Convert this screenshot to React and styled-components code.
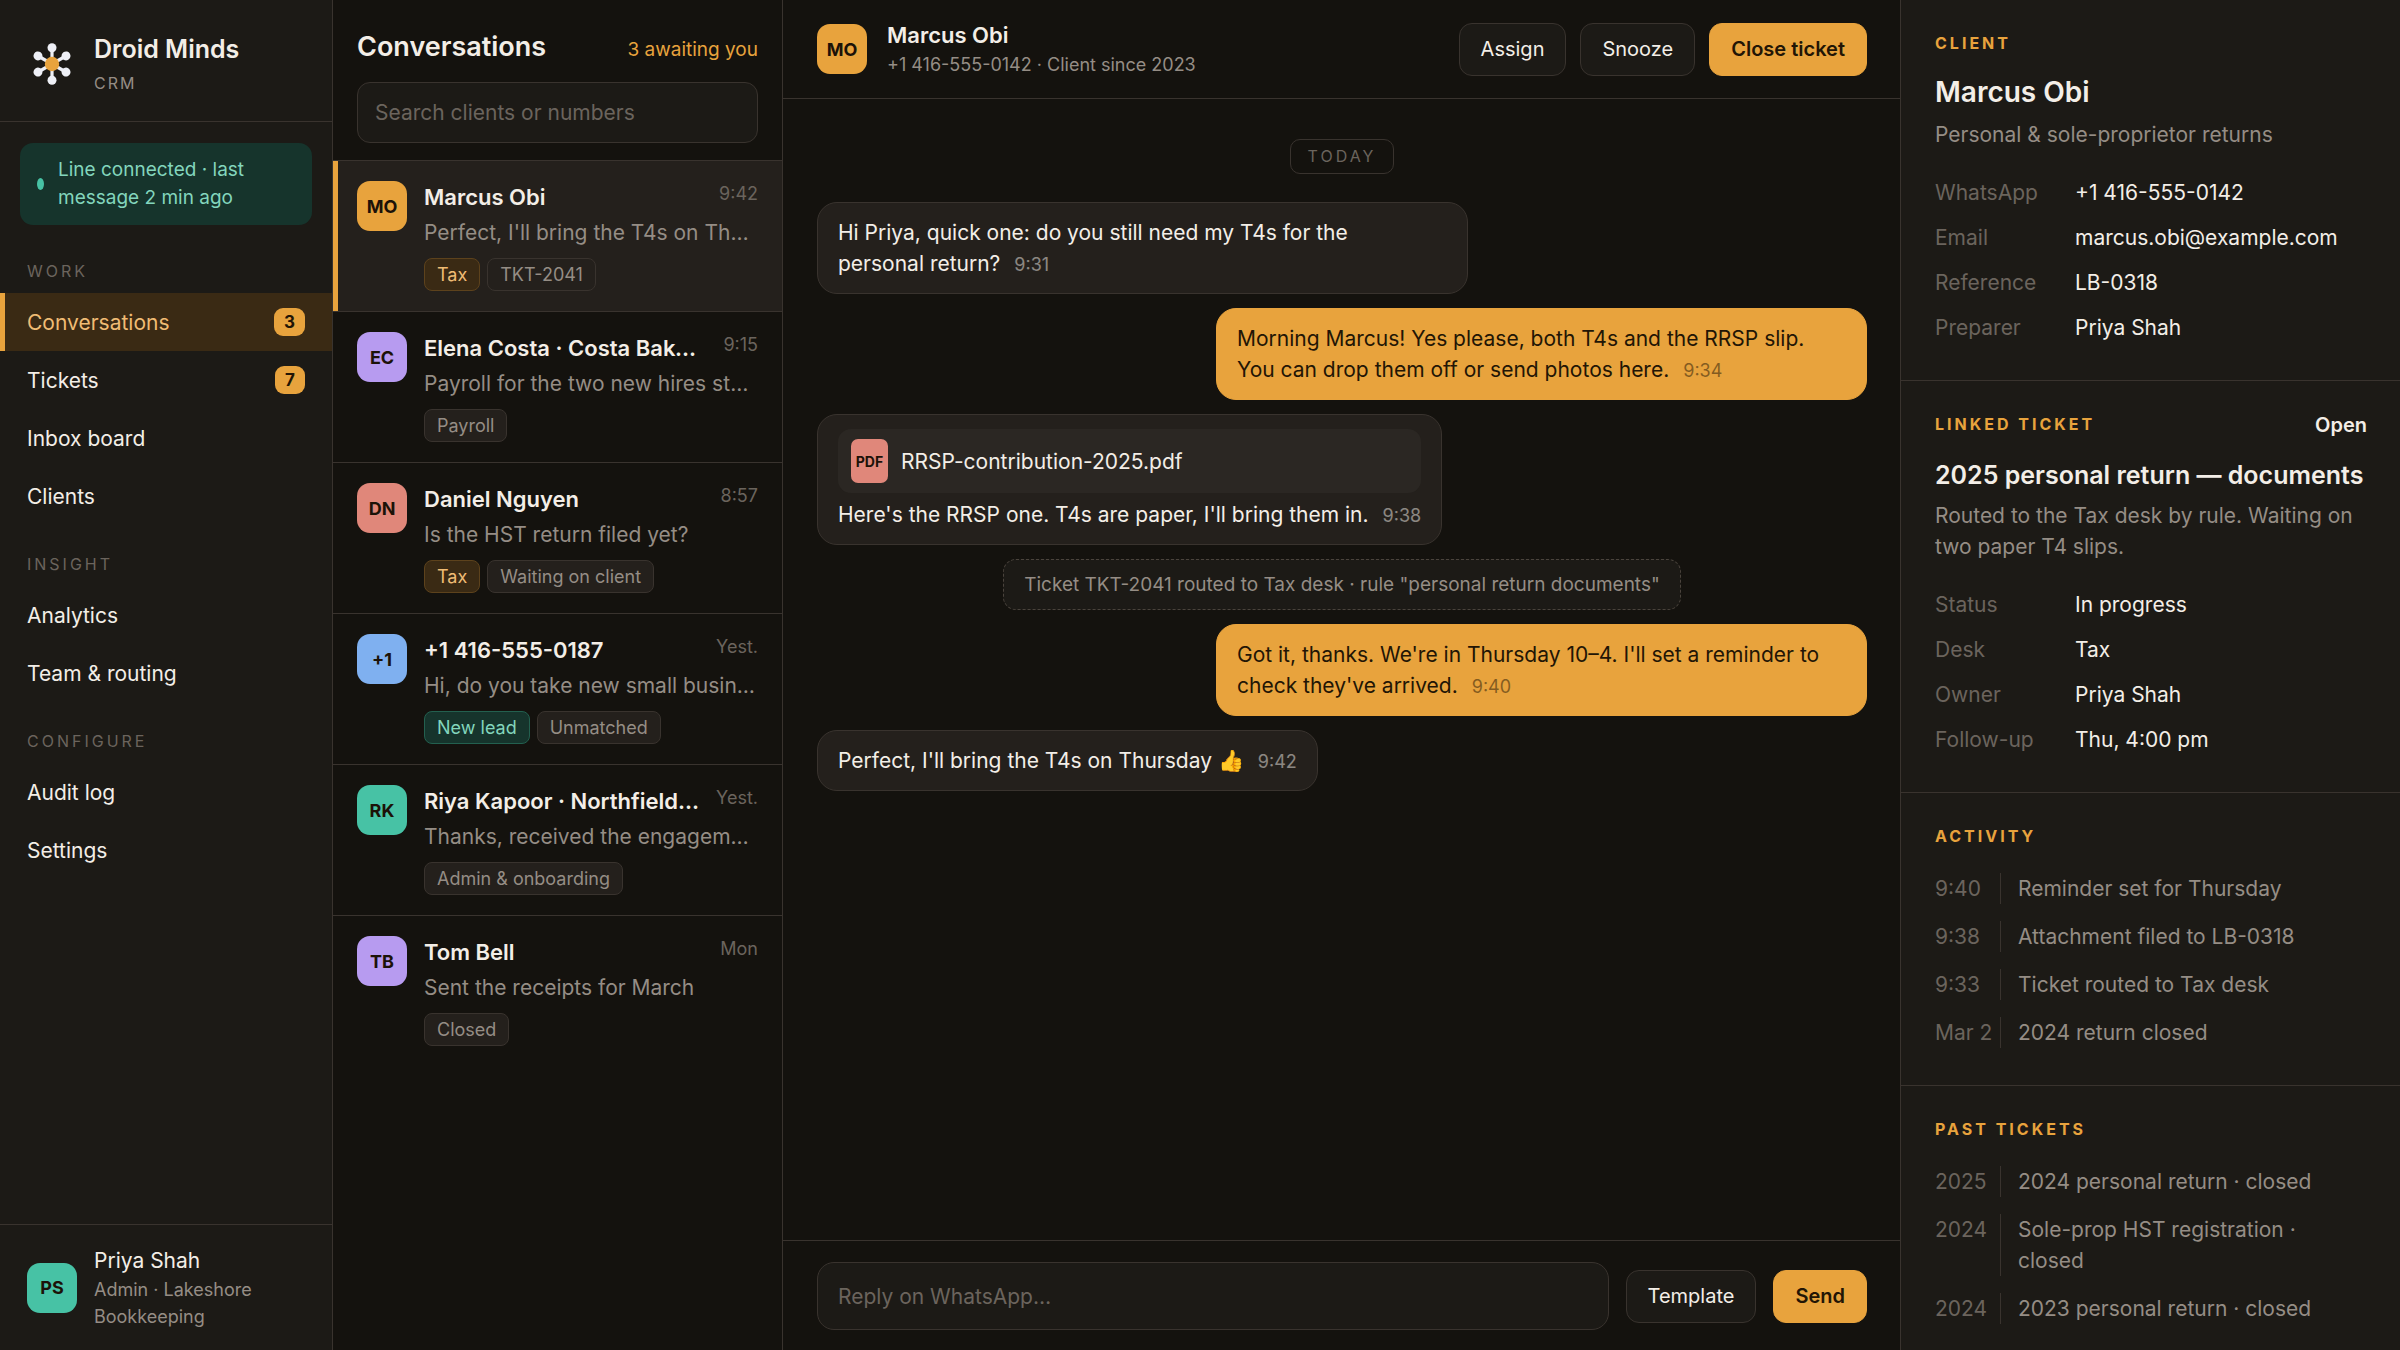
import styled, { createGlobalStyle, css } from 'styled-components';

const GlobalStyle = createGlobalStyle`
  :root {
    --bg: #14120e;
    --panel: #1c1a16;
    --raised: #24201c;
    --line: #39332e;
    --text: #f3eee7;
    --muted: #958d85;
    --faint: #6b645d;
    --amber: #e8a33d;
    --amber-soft: #f0bc74;
    --amber-dim: #3a2a14;
    --teal: #47c2a5;
    --teal-dim: #16342c;
    --ink: #221505;
  }

  * {
    box-sizing: border-box;
  }

  body {
    margin: 0;
    background-color: var(--bg);
    color: var(--text);
    font-family: Inter, "Liberation Sans", sans-serif;
    font-size: 21px;
    line-height: 31px;
  }

  h1, h2, h3, p, ul, dl, dd {
    margin: 0;
    padding: 0;
  }

  ul {
    list-style: none;
  }

  a {
    color: inherit;
    text-decoration: none;
  }
`;

const ellipsis = css`
  overflow: hidden;
  text-overflow: ellipsis;
  white-space: nowrap;
`;

const Shell = styled.div`
  display: grid;
  grid-template-columns: 333px 450px minmax(0, 1fr) 500px;
  height: 100vh;
`;

const Avatar = styled.span`
  flex: none;
  display: flex;
  align-items: center;
  justify-content: center;
  width: 50px;
  height: 50px;
  border-radius: 13px;
  background-color: ${({ $color }) => $color};
  color: #1c1208;
  font-size: 18px;
  font-weight: 700;
`;

/* sidebar */

const Sidebar = styled.aside`
  display: flex;
  flex-direction: column;
  background-color: var(--panel);
  border-right: 1px solid var(--line);
`;

const Brand = styled.div`
  display: flex;
  align-items: center;
  gap: 17px;
  padding: 30px 27px 23px;
  border-bottom: 1px solid var(--line);
`;

const BrandName = styled.div`
  font-size: 25px;
  font-weight: 600;
  line-height: 38px;
`;

const BrandTag = styled.div`
  color: var(--muted);
  font-size: 16px;
  line-height: 30px;
  letter-spacing: 2px;
`;

const LineStatus = styled.div`
  display: flex;
  align-items: center;
  gap: 14px;
  margin: 21px 20px 7px;
  padding: 13px 17px;
  border-radius: 13px;
  background-color: var(--teal-dim);
  color: #83d6bd;
  font-size: 19px;
  line-height: 28px;
`;

const StatusDot = styled.span`
  flex: none;
  width: 7px;
  height: 12px;
  border-radius: 50%;
  background-color: var(--teal);
`;

const NavHeading = styled.h3`
  padding: 25px 27px 8px;
  color: var(--faint);
  font-size: 16px;
  font-weight: 400;
  line-height: 28px;
  letter-spacing: 3px;
`;

const NavLink = styled.a`
  display: flex;
  align-items: center;
  justify-content: space-between;
  height: 58px;
  padding: 0 27px;
  ${({ $active }) => $active && css`
    background-color: var(--amber-dim);
    color: var(--amber-soft);
    box-shadow: inset 5px 0 0 var(--amber);
  `}
`;

const NavCount = styled.span`
  padding: 0 10px;
  border-radius: 9px;
  background-color: var(--amber);
  color: var(--ink);
  font-size: 17px;
  font-weight: 700;
  line-height: 28px;
`;

const UserCard = styled.div`
  display: flex;
  align-items: center;
  gap: 17px;
  margin-top: auto;
  padding: 20px 27px;
  border-top: 1px solid var(--line);
`;

const UserRole = styled.div`
  color: var(--muted);
  font-size: 18px;
  line-height: 27px;
`;

/* conversation list */

const ListPane = styled.section`
  border-right: 1px solid var(--line);
`;

const ListHeader = styled.header`
  padding: 28px 24px 17px;
  border-bottom: 1px solid var(--line);
`;

const ListTitleRow = styled.div`
  display: flex;
  align-items: baseline;
  justify-content: space-between;
  margin-bottom: 16px;
`;

const ListTitle = styled.h1`
  font-size: 27px;
  font-weight: 600;
  line-height: 38px;
`;

const Awaiting = styled.span`
  color: var(--amber);
  font-size: 19px;
`;

const fieldStyles = css`
  width: 100%;
  border: 1px solid var(--line);
  background-color: var(--panel);
  color: var(--text);
  font-family: inherit;
  font-size: 21px;
  outline: none;

  &::placeholder {
    color: var(--faint);
    opacity: 1;
  }
`;

const SearchInput = styled.input`
  ${fieldStyles}
  display: block;
  height: 61px;
  padding: 0 17px;
  border-radius: 13px;
`;

const Conversation = styled.a`
  display: flex;
  align-items: flex-start;
  gap: 17px;
  padding: 20px 24px;
  border-bottom: 1px solid var(--line);
  ${({ $active }) => $active && css`
    background-color: var(--raised);
    box-shadow: inset 5px 0 0 var(--amber);
  `}

  li:last-child > & {
    border-bottom: 0;
  }
`;

const ConversationBody = styled.div`
  flex: 1;
  min-width: 0;
`;

const ConversationTop = styled.div`
  display: flex;
  justify-content: space-between;
  gap: 15px;
`;

const ConversationName = styled.span`
  ${ellipsis}
  font-size: 22px;
  font-weight: 600;
  line-height: 32px;
`;

const ConversationTime = styled.span`
  flex: none;
  color: var(--faint);
  font-size: 18px;
  line-height: 26px;
`;

const Preview = styled.p`
  ${ellipsis}
  margin-top: 4px;
  color: var(--muted);
`;

const Tags = styled.div`
  display: flex;
  gap: 7px;
  margin-top: 10px;
`;

const tagTones = {
  amber: css`
    border-color: #5d421c;
    background-color: var(--amber-dim);
    color: var(--amber-soft);
  `,
  teal: css`
    border-color: #23604f;
    background-color: var(--teal-dim);
    color: #83d6bd;
  `,
};

const Tag = styled.span`
  padding: 0 12px;
  border: 1px solid var(--line);
  border-radius: 8px;
  background-color: var(--raised);
  color: var(--muted);
  font-size: 18px;
  line-height: 31px;
  ${({ $tone }) => tagTones[$tone]}
`;

/* thread */

const Thread = styled.main`
  display: flex;
  flex-direction: column;
  min-width: 0;
`;

const ThreadHeader = styled.header`
  display: flex;
  align-items: center;
  gap: 20px;
  height: 99px;
  padding: 0 33px 0 34px;
  border-bottom: 1px solid var(--line);
`;

const ThreadWho = styled.div`
  flex: 1;
`;

const ThreadName = styled.h2`
  font-size: 22px;
  font-weight: 600;
  line-height: 31px;
`;

const ThreadMeta = styled.p`
  color: var(--muted);
  font-size: 18px;
  line-height: 27px;
`;

const Actions = styled.div`
  display: flex;
  gap: 14px;
`;

const Button = styled.button`
  height: 53px;
  padding: 0 21px;
  border: 1px solid ${({ $primary }) => ($primary ? 'var(--amber)' : 'var(--line)')};
  border-radius: 13px;
  background-color: ${({ $primary }) => ($primary ? 'var(--amber)' : 'var(--panel)')};
  color: ${({ $primary }) => ($primary ? 'var(--ink)' : 'var(--text)')};
  font-family: inherit;
  font-size: 20px;
  font-weight: ${({ $primary }) => ($primary ? 600 : 400)};
  cursor: pointer;
`;

const Messages = styled.div`
  flex: 1;
  display: flex;
  flex-direction: column;
  align-items: flex-start;
  gap: 14px;
  min-height: 0;
  padding: 40px 33px 40px 34px;
  overflow: hidden;
`;

const DayMark = styled.div`
  align-self: center;
  margin-bottom: 14px;
  padding: 0 17px;
  border: 1px solid var(--line);
  border-radius: 10px;
  color: var(--faint);
  font-size: 16px;
  line-height: 33px;
  letter-spacing: 3px;
`;

const Bubble = styled.div`
  max-width: 62%;
  padding: 14px 20px;
  border: 1px solid var(--line);
  border-radius: 20px;
  background-color: var(--raised);
  ${({ $out }) => $out && css`
    align-self: flex-end;
    border-color: var(--amber);
    background-color: var(--amber);
    color: var(--ink);
  `}
`;

const BubbleTime = styled.time`
  margin-left: 14px;
  font-size: 18px;
  line-height: 1;
  opacity: 0.5;
`;

const Attachment = styled.a`
  display: flex;
  align-items: center;
  gap: 13px;
  margin-bottom: 6px;
  padding: 10px 13px;
  border-radius: 13px;
  background-color: #2b2723;
`;

const FileBadge = styled.span`
  display: flex;
  align-items: center;
  justify-content: center;
  width: 37px;
  height: 44px;
  border-radius: 7px;
  background-color: #e0877a;
  color: #1c1208;
  font-size: 14px;
  font-weight: 700;
`;

const SystemNote = styled.div`
  align-self: center;
  padding: 10px 20px;
  border: 1px dashed #4a433c;
  border-radius: 13px;
  background-color: var(--panel);
  color: var(--muted);
  font-size: 19px;
  line-height: 29px;
`;

const Composer = styled.form`
  display: flex;
  align-items: center;
  gap: 17px;
  padding: 21px 33px 20px 34px;
  border-top: 1px solid var(--line);
`;

const ReplyInput = styled.input`
  ${fieldStyles}
  flex: 1;
  min-width: 0;
  height: 68px;
  padding: 0 20px;
  border-radius: 17px;
`;

/* client details */

const Details = styled.aside`
  min-width: 0;
  overflow-y: auto;
  scrollbar-width: none;
  background-color: var(--panel);
  border-left: 1px solid var(--line);
`;

const Section = styled.section`
  padding: 29px 33px 37px 34px;

  & + & {
    border-top: 1px solid var(--line);
  }
`;

const SectionHead = styled.div`
  display: flex;
  justify-content: space-between;
  height: 28px;
`;

const SectionLabel = styled.h3`
  color: var(--amber);
  font-size: 16px;
  font-weight: 700;
  line-height: 28px;
  letter-spacing: 3px;
`;

const TicketState = styled.span`
  font-size: 20px;
  font-weight: 600;
`;

const ClientName = styled.h2`
  margin-top: 16px;
  font-size: 28px;
  font-weight: 600;
  line-height: 38px;
`;

const TicketTitle = styled.h2`
  margin-top: 20px;
  font-size: 25px;
  font-weight: 600;
  line-height: 34px;
`;

const Summary = styled.p`
  margin-top: 8px;
  color: var(--muted);
`;

const Facts = styled.dl`
  display: grid;
  grid-template-columns: 120px minmax(0, 1fr);
  gap: 14px 20px;
  margin-top: 27px;

  dt {
    color: var(--faint);
  }
`;

const Timeline = styled.ul`
  display: flex;
  flex-direction: column;
  gap: 17px;
  margin-top: 23px;
`;

const TimelineItem = styled.li`
  display: grid;
  grid-template-columns: 65px minmax(0, 1fr);
  color: var(--muted);

  time {
    color: var(--faint);
    white-space: nowrap;
  }

  span {
    padding: 0 17px;
    border-left: 1px solid var(--line);
  }
`;

const NAV = [
  {
    heading: 'WORK',
    items: [
      { label: 'Conversations', count: 3, active: true },
      { label: 'Tickets', count: 7 },
      { label: 'Inbox board' },
      { label: 'Clients' },
    ],
  },
  { heading: 'INSIGHT', items: [{ label: 'Analytics' }, { label: 'Team & routing' }] },
  { heading: 'CONFIGURE', items: [{ label: 'Audit log' }, { label: 'Settings' }] },
];

const CONVERSATIONS = [
  {
    initials: 'MO', color: '#e8a33d', name: 'Marcus Obi', time: '9:42', active: true,
    preview: "Perfect, I'll bring the T4s on Thursday 👍",
    tags: [{ label: 'Tax', tone: 'amber' }, { label: 'TKT-2041' }],
  },
  {
    initials: 'EC', color: '#b79bf0', name: 'Elena Costa · Costa Bakehouse', time: '9:15',
    preview: 'Payroll for the two new hires starting Monday',
    tags: [{ label: 'Payroll' }],
  },
  {
    initials: 'DN', color: '#e0877a', name: 'Daniel Nguyen', time: '8:57',
    preview: 'Is the HST return filed yet?',
    tags: [{ label: 'Tax', tone: 'amber' }, { label: 'Waiting on client' }],
  },
  {
    initials: '+1', color: '#7fb0f0', name: '+1 416-555-0187', time: 'Yest.',
    preview: 'Hi, do you take new small business clients?',
    tags: [{ label: 'New lead', tone: 'teal' }, { label: 'Unmatched' }],
  },
  {
    initials: 'RK', color: '#47c2a5', name: 'Riya Kapoor · Northfield Dental', time: 'Yest.',
    preview: 'Thanks, received the engagement letter',
    tags: [{ label: 'Admin & onboarding' }],
  },
  {
    initials: 'TB', color: '#b79bf0', name: 'Tom Bell', time: 'Mon',
    preview: 'Sent the receipts for March',
    tags: [{ label: 'Closed' }],
  },
];

const CLIENT_FACTS = [
  ['WhatsApp', '+1 416-555-0142'],
  ['Email', 'marcus.obi@example.com'],
  ['Reference', 'LB-0318'],
  ['Preparer', 'Priya Shah'],
];

const TICKET_FACTS = [
  ['Status', 'In progress'],
  ['Desk', 'Tax'],
  ['Owner', 'Priya Shah'],
  ['Follow-up', 'Thu, 4:00 pm'],
];

const ACTIVITY = [
  ['9:40', 'Reminder set for Thursday'],
  ['9:38', 'Attachment filed to LB-0318'],
  ['9:33', 'Ticket routed to Tax desk'],
  ['Mar 2', '2024 return closed'],
];

const PAST_TICKETS = [
  ['2025', '2024 personal return · closed'],
  ['2024', 'Sole-prop HST registration · closed'],
  ['2024', '2023 personal return · closed'],
];

// six nodes around an amber hub
const Logo = () => (
  <svg width="50" height="50" viewBox="-25 -25 50 50" aria-hidden="true">
    {[0, 60, 120, 180, 240, 300].map((angle) => (
      <g key={angle} transform={`rotate(${angle})`} fill="#eef0f6">
        <rect x="-1.6" y="-14" width="3.2" height="14" />
        <circle cy="-16.2" r="4.5" />
      </g>
    ))}
    <circle r="7.2" fill="#e8a33d" />
  </svg>
);

const Message = ({ out, time, attachment, children }) => (
  <Bubble $out={out}>
    {attachment && (
      <Attachment href="#attachment">
        <FileBadge>PDF</FileBadge>
        {attachment}
      </Attachment>
    )}
    {children}
    <BubbleTime>{time}</BubbleTime>
  </Bubble>
);

const FactList = ({ facts }) => (
  <Facts>
    {facts.map(([term, value]) => [
      <dt key={term}>{term}</dt>,
      <dd key={`${term}-value`}>{value}</dd>,
    ])}
  </Facts>
);

const EventList = ({ events }) => (
  <Timeline>
    {events.map(([when, text]) => (
      <TimelineItem key={text}>
        <time>{when}</time>
        <span>{text}</span>
      </TimelineItem>
    ))}
  </Timeline>
);

const App = () => (
  <>
    <GlobalStyle />
    <Shell>
      <Sidebar>
        <Brand>
          <Logo />
          <div>
            <BrandName>Droid Minds</BrandName>
            <BrandTag>CRM</BrandTag>
          </div>
        </Brand>
        <LineStatus>
          <StatusDot />
          <span>Line connected · last message 2 min ago</span>
        </LineStatus>
        <nav>
          {NAV.map(({ heading, items }) => (
            <div key={heading}>
              <NavHeading>{heading}</NavHeading>
              {items.map(({ label, count, active }) => (
                <NavLink key={label} href="#nav" $active={active}>
                  {label}
                  {count && <NavCount>{count}</NavCount>}
                </NavLink>
              ))}
            </div>
          ))}
        </nav>
        <UserCard>
          <Avatar $color="#47c2a5">PS</Avatar>
          <div>
            <div>Priya Shah</div>
            <UserRole>Admin · Lakeshore Bookkeeping</UserRole>
          </div>
        </UserCard>
      </Sidebar>

      <ListPane>
        <ListHeader>
          <ListTitleRow>
            <ListTitle>Conversations</ListTitle>
            <Awaiting>3 awaiting you</Awaiting>
          </ListTitleRow>
          <SearchInput
            type="search"
            aria-label="Search clients or numbers"
            placeholder="Search clients or numbers"
          />
        </ListHeader>
        <ul>
          {CONVERSATIONS.map(({ initials, color, name, time, preview, tags, active }) => (
            <li key={name}>
              <Conversation href="#conversation" $active={active}>
                <Avatar $color={color}>{initials}</Avatar>
                <ConversationBody>
                  <ConversationTop>
                    <ConversationName>{name}</ConversationName>
                    <ConversationTime>{time}</ConversationTime>
                  </ConversationTop>
                  <Preview>{preview}</Preview>
                  <Tags>
                    {tags.map(({ label, tone }) => (
                      <Tag key={label} $tone={tone}>{label}</Tag>
                    ))}
                  </Tags>
                </ConversationBody>
              </Conversation>
            </li>
          ))}
        </ul>
      </ListPane>

      <Thread>
        <ThreadHeader>
          <Avatar $color="#e8a33d">MO</Avatar>
          <ThreadWho>
            <ThreadName>Marcus Obi</ThreadName>
            <ThreadMeta>+1 416-555-0142 · Client since 2023</ThreadMeta>
          </ThreadWho>
          <Actions>
            <Button type="button">Assign</Button>
            <Button type="button">Snooze</Button>
            <Button type="button" $primary>Close ticket</Button>
          </Actions>
        </ThreadHeader>

        <Messages>
          <DayMark>TODAY</DayMark>
          <Message time="9:31">
            Hi Priya, quick one: do you still need my T4s for the personal&nbsp;return?
          </Message>
          <Message out time="9:34">
            Morning Marcus! Yes please, both T4s and the RRSP slip. You&nbsp;can drop them off or send photos here.
          </Message>
          <Message time="9:38" attachment="RRSP-contribution-2025.pdf">
            Here's the RRSP one. T4s are paper, I'll bring them in.
          </Message>
          <SystemNote>
            Ticket TKT-2041 routed to Tax desk · rule "personal return documents"
          </SystemNote>
          <Message out time="9:40">
            Got it, thanks. We're in Thursday 10–4. I'll set a reminder to check they've arrived.
          </Message>
          <Message time="9:42">Perfect, I'll bring the T4s on Thursday 👍</Message>
        </Messages>

        <Composer>
          <ReplyInput type="text" aria-label="Reply on WhatsApp" placeholder="Reply on WhatsApp…" />
          <Button type="button">Template</Button>
          <Button type="button" $primary>Send</Button>
        </Composer>
      </Thread>

      <Details>
        <Section>
          <SectionLabel>CLIENT</SectionLabel>
          <ClientName>Marcus Obi</ClientName>
          <Summary>Personal &amp; sole-proprietor returns</Summary>
          <FactList facts={CLIENT_FACTS} />
        </Section>
        <Section>
          <SectionHead>
            <SectionLabel>LINKED TICKET</SectionLabel>
            <TicketState>Open</TicketState>
          </SectionHead>
          <TicketTitle>2025 personal return — documents</TicketTitle>
          <Summary>Routed to the Tax desk by rule. Waiting on two paper T4 slips.</Summary>
          <FactList facts={TICKET_FACTS} />
        </Section>
        <Section>
          <SectionLabel>ACTIVITY</SectionLabel>
          <EventList events={ACTIVITY} />
        </Section>
        <Section>
          <SectionLabel>PAST TICKETS</SectionLabel>
          <EventList events={PAST_TICKETS} />
        </Section>
      </Details>
    </Shell>
  </>
);

export default App;
